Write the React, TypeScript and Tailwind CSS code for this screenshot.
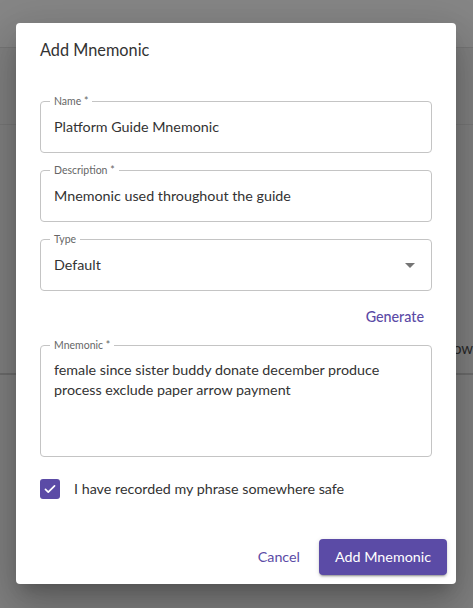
import { useState } from 'react'

const font = { fontFamily: 'Lato, "Noto Sans", sans-serif' }

function OutlinedField({ label, children, className = '' }: { label: string; children: React.ReactNode; className?: string }) {
  return (
    <div className={`relative rounded-[4px] border border-[#c4c4c4] ${className}`}>
      <span className="absolute -top-[7px] left-[9px] bg-white px-1 text-[10.5px] leading-[12px] text-[#666]">{label}</span>
      {children}
    </div>
  )
}

function ArrowDropDown() {
  return (
    <svg viewBox="0 0 24 24" className="h-6 w-6" fill="#757575">
      <path d="M7 10l5 5 5-5z" />
    </svg>
  )
}

function CheckIcon() {
  return (
    <svg viewBox="0 0 20 20" className="h-[14px] w-[14px]" fill="none" stroke="white" strokeWidth="2.4" strokeLinecap="round" strokeLinejoin="round">
      <path d="M3.5 10.5l4 4 9-9" />
    </svg>
  )
}

export default function App() {
  const [checked, setChecked] = useState(true)

  return (
    <div className="relative h-[608px] w-[473px] overflow-hidden bg-[#808080]" style={font}>
      {/* dimmed page behind the dialog */}
      <div className="h-[48px] border-b border-[#777] bg-[#868686]" />
      <div className="h-[77px] border-b border-[#777]" />
      <div className="relative h-[250px] border-b-2 border-[#6c6c6c]">
        <span className="absolute left-[444px] top-[212px] text-[15px] text-[#2a2a2a]">Row</span>
      </div>

      <div className="absolute inset-0 flex items-start justify-start pl-4 pt-[23px]">
        <div className="flex h-[561px] w-[440px] flex-col rounded-[4px] bg-white shadow-[0_11px_15px_-7px_rgba(0,0,0,0.2),0_24px_38px_3px_rgba(0,0,0,0.14),0_9px_46px_8px_rgba(0,0,0,0.12)]">
          <h2 className="px-6 pt-4 pb-4 text-[16.3px] leading-[22px] text-[#333]">Add Mnemonic</h2>

          <div className="flex flex-col px-6 pt-[24px]">
            <OutlinedField label="Name *" className="h-[52px]">
              <div className="flex h-full items-center px-[13px] text-[14.3px] text-[#333]">Platform Guide Mnemonic</div>
            </OutlinedField>
            <OutlinedField label="Description *" className="mt-[17px] h-[52px]">
              <div className="flex h-full items-center px-[13px] text-[14.3px] text-[#333]">Mnemonic used throughout the guide</div>
            </OutlinedField>
            <OutlinedField label="Type" className="mt-[17px] h-[52px]">
              <div className="flex h-full items-center justify-between pl-[13px] pr-[9px] text-[14.3px] text-[#333]">
                <span>Default</span>
                <ArrowDropDown />
              </div>
            </OutlinedField>

            <div className="mt-2 flex justify-end">
              <button className="h-9 rounded-[4px] px-2 text-[14.3px] font-medium text-[#5b4ba6]">Generate</button>
            </div>

            <OutlinedField label="Mnemonic *" className="mt-[10px] h-[112px]">
              <p className="px-[13px] pt-[14px] text-[14.3px] leading-[20px] text-[#333]">
                female since sister buddy donate december produce process exclude paper arrow payment
              </p>
            </OutlinedField>

            <label className="mt-[21px] flex items-center gap-[14px]">
              <button
                type="button"
                onClick={() => setChecked(!checked)}
                className={`flex h-5 w-5 items-center justify-center rounded-[3px] ${checked ? 'bg-[#5b4ba6]' : 'border-2 border-[#777]'}`}
              >
                {checked && <CheckIcon />}
              </button>
              <span className="text-[14.3px] text-[#333]">I have recorded my phrase somewhere safe</span>
            </label>
          </div>

          <div className="mt-auto flex items-center justify-end gap-[11px] pr-[9px] pb-[9px]">
            <button className="h-9 rounded-[4px] px-2 text-[14.3px] text-[#5b4ba6]">Cancel</button>
            <button className="h-9 rounded-[4px] bg-[#5b4ba6] px-4 text-[14.3px] text-white shadow-[0_3px_1px_-2px_rgba(0,0,0,0.2),0_2px_2px_0_rgba(0,0,0,0.14),0_1px_5px_0_rgba(0,0,0,0.12)]">
              Add Mnemonic
            </button>
          </div>
        </div>
      </div>
    </div>
  )
}
